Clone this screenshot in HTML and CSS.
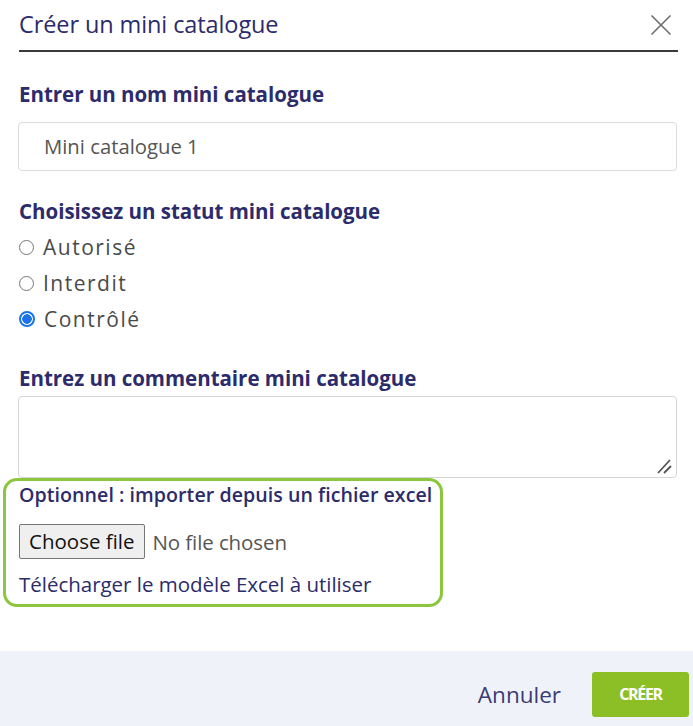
FILE: index.html
```html
<!DOCTYPE html>
<html lang="fr">
<head>
<meta charset="utf-8">
<title>Créer un mini catalogue</title>
<link rel="stylesheet" href="styles.css">
</head>
<body>
<div class="modal">
  <header class="modal-header">
    <h1 class="modal-title">Créer un mini catalogue</h1>
    <button class="close" aria-label="Fermer">
      <svg width="22" height="22" viewBox="0 0 22 22"><path d="M1.5 1.5 L20.5 20.5 M20.5 1.5 L1.5 20.5" stroke="#6d6d6d" stroke-width="1.6" fill="none"/></svg>
    </button>
  </header>

  <div class="modal-body">
    <label class="field-label label-name">Entrer un nom mini catalogue</label>
    <div class="text-input">Mini catalogue 1</div>

    <div class="field-label label-status">Choisissez un statut mini catalogue</div>
    <div class="radios">
      <label class="radio"><span class="dot"></span>Autorisé</label>
      <label class="radio"><span class="dot"></span>Interdit</label>
      <label class="radio"><span class="dot checked"></span>Contrôlé</label>
    </div>

    <div class="field-label label-comment">Entrez un commentaire mini catalogue</div>
    <div class="textarea">
      <svg class="grip" width="16" height="16" viewBox="0 0 16 16"><path d="M2 15 L14 2 M8 15 L15 8" stroke="#555" stroke-width="1.8" fill="none"/></svg>
    </div>

    <div class="import-box">
      <div class="import-title">Optionnel : importer depuis un fichier excel</div>
      <div class="file-row">
        <span class="file-btn">Choose file</span>
        <span class="file-name">No file chosen</span>
      </div>
      <a class="template-link">Télécharger le modèle Excel à utiliser</a>
    </div>
  </div>

  <footer class="modal-footer">
    <span class="cancel">Annuler</span>
    <span class="create">CRÉER</span>
  </footer>
</div>
</body>
</html>
```

FILE: styles.css
```css
html, body {
  margin: 0;
  padding: 0;
  background: #ffffff;
}
body {
  font-family: "Open Sans", "Noto Sans", sans-serif;
  color: #2c2b6b;
  width: 693px;
  height: 726px;
  overflow: hidden;
}
.modal {
  display: flex;
  flex-direction: column;
  height: 726px;
}
.modal-header {
  display: flex;
  align-items: center;
  justify-content: space-between;
  margin: 0 15px 0 19px;
  height: 50px;
  border-bottom: 2px solid #3a3a3a;
}
.modal-title {
  margin: 0;
  font-size: 23.5px;
  font-weight: 400;
  color: #2c2b6b;
  line-height: 50px;
  letter-spacing: -0.1px;
  position: relative;
  top: -1px;
}
.close {
  border: 0;
  background: none;
  padding: 0;
  margin-right: 6px;
  width: 22px;
  height: 22px;
}
.close svg { display: block; }

.modal-body {
  padding: 0 16px 0 18px;
  flex: 1;
}
.field-label {
  display: block;
  font-weight: 700;
  font-size: 20.5px;
  line-height: 26px;
  color: #2c2b6b;
  padding-left: 1px;
  letter-spacing: -0.02px;
  white-space: nowrap;
}
.label-name { margin-top: 29px; }
.text-input {
  margin-top: 15px;
  height: 47px;
  border: 1px solid #dcdcdc;
  border-radius: 4px;
  box-sizing: content-box;
  padding-left: 25px;
  font-size: 20.3px;
  line-height: 47px;
  color: #555555;
}
.label-status { margin-top: 27px; }
.radios {
  display: flex;
  flex-direction: column;
  margin-top: 5px;
}
.radio {
  display: flex;
  align-items: center;
  height: 36px;
  font-size: 21px;
  color: #4a4a4a;
  letter-spacing: 1.5px;
}
.dot {
  width: 13px;
  height: 13px;
  border: 1.5px solid #767676;
  border-radius: 50%;
  margin: 0 9px 0 1px;
  box-sizing: content-box;
  flex: none;
}
.dot.checked {
  border: 2px solid #1a73e8;
  width: 12px;
  height: 12px;
  background: radial-gradient(circle, #1a73e8 0 4.5px, #ffffff 5px);
}
.label-comment { margin-top: 28px; }
.textarea {
  margin-top: 5px;
  height: 80px;
  border: 1px solid #d6d6d6;
  border-radius: 4px;
  position: relative;
}
.grip {
  position: absolute;
  right: 4px;
  bottom: 3px;
}
.import-box {
  margin: 0 0 0 -15px;
  width: 421px;
  height: 123px;
  border: 3px solid #8cc63f;
  border-radius: 14px;
  padding: 0 0 0 13px;
  box-sizing: content-box;
}
.import-title {
  font-size: 19.6px;
  font-weight: 600;
  line-height: 26px;
  color: #2c2b6b;
  margin-top: 1px;
  letter-spacing: 0.05px;
  white-space: nowrap;
}
.file-row {
  display: flex;
  align-items: center;
  margin-top: 16px;
}
.file-btn {
  display: inline-block;
  height: 33px;
  line-height: 33px;
  padding: 0 9px;
  border: 1px solid #767676;
  border-radius: 2px;
  background: #efefef;
  font-size: 20.5px;
  color: #111111;
  letter-spacing: 0;
}
.file-name {
  margin-left: 8px;
  font-size: 20.5px;
  color: #555555;
  letter-spacing: -0.1px;
}
.template-link {
  display: block;
  margin-top: 12px;
  font-size: 20.5px;
  line-height: 26px;
  color: #2c2b6b;
  letter-spacing: -0.02px;
  white-space: nowrap;
}

.modal-footer {
  height: 75px;
  background: #eff3f9;
  display: flex;
  align-items: flex-start;
  justify-content: flex-end;
  padding: 21px 4px 0 0;
  box-sizing: border-box;
  flex: none;
}
.cancel {
  font-size: 22.5px;
  line-height: 45px;
  color: #3b3a75;
  margin-right: 31px;
}
.create {
  width: 97px;
  height: 45px;
  line-height: 45px;
  text-align: center;
  background: #8cbf26;
  border-radius: 3px;
  color: #ffffff;
  font-size: 16px;
  font-weight: 700;
  letter-spacing: -1.3px;
}
```
